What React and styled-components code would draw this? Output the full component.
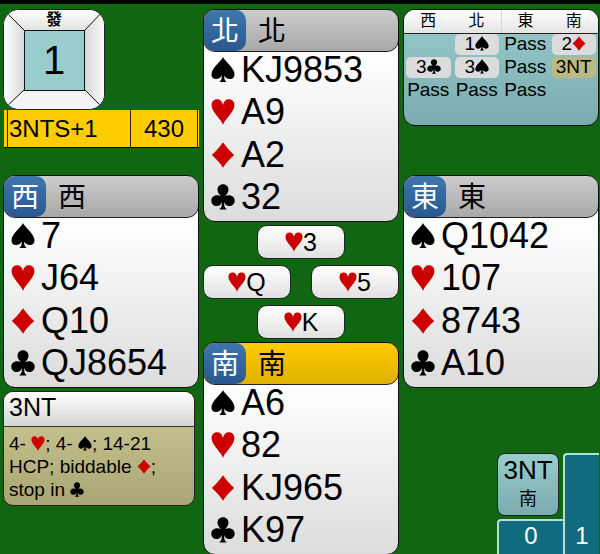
import React from "react";
import styled, { createGlobalStyle } from "styled-components";

const GlobalStyle = createGlobalStyle`
	* {
		box-sizing: border-box;
	}

	body {
		margin: 0;
		background: #116611;
		color: #000;
		font-family: "Liberation Sans", "Noto Sans CJK TC", sans-serif;
	}
`;

const StyledTable = styled.main`
	display: grid;
	grid-template-columns: repeat(3, 1fr);
	grid-template-rows: minmax(0, 1fr);
	gap: 4px;
	height: 100vh;
	min-height: 554px;
	overflow: hidden;
	padding: 5px 1px 0 3px;
	border-top: 4px solid #000;
	background: #116611;
`;

const StyledColumn = styled.div`
	display: flex;
	flex-direction: column;
	gap: 3px;
	min-width: 0;
`;

const StyledTop = styled.div`
	flex: none;
	height: 163px;
`;

const StyledBoard = styled.div`
	position: relative;
	display: grid;
	grid-template-rows: 20px 61px;
	justify-content: center;
	justify-items: center;
	width: 102px;
	height: 101px;
	border: 1px solid #222;
	border-radius: 16px;
	background: #fafafa;
	overflow: hidden;
`;

const StyledFrame = styled.svg`
	position: absolute;
	inset: 0;
`;

const StyledDealer = styled.span`
	z-index: 1;
	font-size: 16px;
	font-weight: 700;
	line-height: 20px;
`;

const StyledBoardNumber = styled.span`
	z-index: 1;
	font-size: 40px;
	line-height: 60px;
`;

const StyledScore = styled.div`
	display: flex;
	height: 38px;
	margin-left: 1px;
	padding: 0 1px 0 3px;
	border-bottom: 1px solid #000;
	background: #ffcc00;
	font-size: 24px;
	line-height: 37px;
`;

const StyledResult = styled.span`
	flex: 1;
	padding-left: 1px;
	border-left: 1px solid #222;
`;

const StyledPoints = styled.span`
	width: 68px;
	text-align: center;
	border: solid #222;
	border-width: 0 1px;
`;

const StyledHand = styled.section`
	flex: none;
	border: 1px solid #111;
	border-radius: 12px;
	overflow: hidden;
	background: linear-gradient(#fff 20%, #dcdcdc);
`;

const StyledHandHeader = styled.header`
	display: flex;
	gap: 12px;
	height: 43px;
	margin: -1px -1px 0;
	border: 1px solid #222;
	border-radius: 12px;
	overflow: hidden;
	font-size: 28px;
	line-height: 43px;
	background: ${({ $active }) =>
		$active
			? "linear-gradient(#ffcc00, #dfb000)"
			: "linear-gradient(#cccccc, #a8a8a8)"};
`;

const StyledSeat = styled.span`
	width: 42px;
	border-radius: 10px;
	background: linear-gradient(#4076ad, #2a5890);
	color: #fff;
	text-align: center;
`;

const StyledSuits = styled.div`
	display: grid;
	grid-template-rows: repeat(4, 1fr);
	align-items: start;
	height: 169px;
`;

const StyledSuitRow = styled.div`
	display: flex;
	align-items: center;
	gap: 6px;
	height: 36px;
	padding-left: 7px;
	font-size: 36px;
	line-height: 36px;
`;

const StyledSuit = styled.svg`
	width: ${({ $size }) => ({ large: 24, medium: 18, small: 14 })[$size]}px;
	height: ${({ $size }) => ({ large: 26, medium: 20, small: 15 })[$size]}px;
	flex: none;
	vertical-align: -1px;
	fill: ${({ $red }) => ($red ? "#cc0000" : "#000")};
`;

const StyledTrick = styled.div`
	display: flex;
	flex-direction: column;
	align-items: center;
	gap: 6px;
	flex: none;
`;

const StyledTrickRow = styled.div`
	display: flex;
	justify-content: space-between;
	width: 100%;
`;

const StyledCard = styled.div`
	width: 88px;
	height: 34px;
	border: 1px solid #222;
	border-radius: 10px;
	background: linear-gradient(#fff, #e0e0e0);
	font-size: 25px;
	line-height: 32px;
	text-align: center;
`;

const StyledExplanation = styled.section`
	margin-right: 4px;
	border: 1px solid #222;
	border-radius: 10px;
	overflow: hidden;
	background: linear-gradient(#c3c08e 30%, #a9a673);
`;

const StyledExplanationTitle = styled.h2`
	height: 35px;
	margin: 0;
	padding-left: 5px;
	border-bottom: 1px solid #333;
	background: linear-gradient(#fff, #d4d4d4);
	font-size: 25px;
	font-weight: 400;
	line-height: 31px;
`;

const StyledExplanationText = styled.p`
	margin: 0;
	padding: 5px 4px 4px 5px;
	font-size: 19px;
	line-height: 23px;
`;

const StyledAuction = styled.section`
	height: 117px;
	border: 1px solid #111;
	border-radius: 12px;
	overflow: hidden;
	background: linear-gradient(#99cccc, #7aabaf);
`;

const StyledBids = styled.table`
	width: 100%;
	table-layout: fixed;
	border-collapse: collapse;
	font-size: 19px;
	line-height: 20px;
	text-align: center;

	thead {
		background: linear-gradient(#fff, #e4e4e4);
	}

	th {
		height: 23px;
		padding: 0;
		border-bottom: 1px solid #222;
		font-size: 16px;
		font-weight: 400;
	}

	th:nth-child(3) {
		border-left: 1px solid #c4dcdc;
	}

	td {
		height: 23px;
		padding: 0 2px;
	}
`;

const StyledBid = styled.span`
	display: block;
	height: 21px;
	border-radius: 5px;
	background: ${({ $kind }) =>
		({ call: "#dcdcdc", final: "#bdb984" })[$kind] || "none"};
`;

const StyledStatus = styled.div`
	display: grid;
	grid-template-columns: 66px 36px;
	grid-template-rows: 66px 35px;
	justify-content: end;
	margin-top: auto;
`;

const StyledContract = styled.div`
	display: flex;
	flex-direction: column;
	align-items: center;
	width: 62px;
	height: 63px;
	border: 1px solid #222;
	border-radius: 8px;
	background: linear-gradient(#99cccc, #7aabaf);
	font-size: 26px;
	line-height: 32px;
`;

const StyledDeclarer = styled.span`
	font-size: 18px;
	line-height: 26px;
`;

const StyledTricksWon = styled.div`
	display: flex;
	align-items: flex-end;
	justify-content: center;
	grid-row: ${({ $tall }) => ($tall ? "1 / 3" : "2")};
	grid-column: ${({ $tall }) => ($tall ? "2" : "1")};
	border: solid #b5dcd8;
	border-width: 2px 0 0 2px;
	border-radius: 4px 0 0 0;
	background: #0f6b7d;
	color: #fff;
	font-size: 24px;
	line-height: 36px;
`;

const suits = {
	S: {
		name: "spades",
		path: "M12 0C13.500 4 23.500 11 23.500 17.200C23.500 20.500 21.300 22 19 22C16.500 22 14.300 20.800 13.200 18.600C13.200 22 13.700 23.700 15.200 24.200V25H8.800V24.200C10.300 23.700 10.800 22 10.800 18.600C9.700 20.800 7.500 22 5 22C2.700 22 0.500 20.500 0.500 17.200C0.500 11 10.500 4 12 0Z",
	},
	H: {
		name: "hearts",
		path: "M12 26C10.500 20.500 1 13.500 0.600 6.800C0.300 2.800 2.700 0.300 6.200 0.300C9.200 0.300 11.200 2.200 12 6C12.800 2.200 14.800 0.300 17.800 0.300C21.300 0.300 23.700 2.800 23.400 6.800C23 13.500 13.500 20.500 12 26Z",
	},
	D: {
		name: "diamonds",
		path: "M12 0.300C15 4.800 18.800 9.200 23.200 13C18.800 16.800 15 21.200 12 25.700C9 21.200 5.200 16.800 0.800 13C5.200 9.200 9 4.800 12 0.300Z",
	},
	C: {
		name: "clubs",
		path: "M12 0.300C15.200 0.300 17.500 2.600 17.500 5.700C17.500 8.300 15.800 10.300 14 12C15.200 11.500 16.300 11.200 17.800 11.200C21.200 11.200 23.700 13.500 23.700 16.700C23.700 19.800 21.300 22 18.200 22C15.700 22 14 20.500 13.100 18C13.100 21.700 13.500 24 15.400 24.700V25.600H8.600V24.700C10.500 24 10.900 21.700 10.900 18C10 20.500 8.300 22 5.800 22C2.700 22 0.300 19.800 0.300 16.700C0.300 13.500 2.800 11.200 6.200 11.200C7.700 11.200 8.800 11.500 10 12C8.200 10.300 6.500 8.300 6.500 5.700C6.500 2.600 8.800 0.300 12 0.300Z",
	},
};

const hands = {
	north: { seat: "北", cards: ["KJ9853", "A9", "A2", "32"] },
	west: { seat: "西", cards: ["7", "J64", "Q10", "QJ8654"] },
	east: { seat: "東", cards: ["Q1042", "107", "8743", "A10"] },
	south: { seat: "南", cards: ["A6", "82", "KJ965", "K97"] },
};

const auction = [
	["", "1S", "Pass", "2D"],
	["3C", "3S", "Pass", "3NT"],
	["Pass", "Pass", "Pass", ""],
];

const Suit = ({ suit, size = "small" }) => (
	<StyledSuit
		$size={size}
		$red={suit === "H" || suit === "D"}
		viewBox="0 0 24 26"
		role="img"
		aria-label={suits[suit].name}
	>
		<path d={suits[suit].path} />
	</StyledSuit>
);

const Board = ({ number }) => (
	<StyledBoard>
		<StyledFrame width="100" height="99" viewBox="0 0 100 99" aria-hidden="true">
			<defs>
				<linearGradient id="left">
					<stop offset="0" stopColor="#fff" />
					<stop offset="1" stopColor="#d8d8d8" />
				</linearGradient>
				<linearGradient id="right">
					<stop offset="0" stopColor="#d8d8d8" />
					<stop offset="1" stopColor="#fafafa" />
				</linearGradient>
				<linearGradient id="edge" x2="0" y2="1">
					<stop offset="0" stopColor="#fff" />
					<stop offset="1" stopColor="#e2e2e2" />
				</linearGradient>
			</defs>
			<path d="M0 0H100L81 20H20Z" fill="url(#edge)" />
			<path d="M20 80H81L100 99H0Z" fill="#f4f4f4" />
			<path d="M0 0L20 20V80L0 99Z" fill="url(#left)" />
			<path d="M100 0L81 20V80L100 99Z" fill="url(#right)" />
			<path d="M0 0L20 20M100 0L81 20M0 99L20 80M100 99L81 80" stroke="#111" />
			<rect x="20.500" y="20.500" width="60" height="60" fill="#99cccc" stroke="#111" />
		</StyledFrame>
		<StyledDealer>發</StyledDealer>
		<StyledBoardNumber>{number}</StyledBoardNumber>
	</StyledBoard>
);

const Hand = ({ seat, cards, active }) => (
	<StyledHand>
		<StyledHandHeader $active={active}>
			<StyledSeat>{seat}</StyledSeat>
			<span>{seat}</span>
		</StyledHandHeader>
		<StyledSuits>
			{Object.keys(suits).map((suit, i) => (
				<StyledSuitRow key={suit}>
					<Suit suit={suit} size="large" />
					<span>{cards[i]}</span>
				</StyledSuitRow>
			))}
		</StyledSuits>
	</StyledHand>
);

const Card = ({ suit, rank }) => (
	<StyledCard>
		<Suit suit={suit} size="medium" />
		{rank}
	</StyledCard>
);

const Bid = ({ call }) => {
	if (!call) return null;
	if (call === "Pass") return <StyledBid>{call}</StyledBid>;
	if (call === "3NT") return <StyledBid $kind="final">{call}</StyledBid>;
	return (
		<StyledBid $kind="call">
			{call[0]}
			<Suit suit={call[1]} />
		</StyledBid>
	);
};

const Auction = () => (
	<StyledAuction>
		<StyledBids>
			<thead>
				<tr>
					<th scope="col">西</th>
					<th scope="col">北</th>
					<th scope="col">東</th>
					<th scope="col">南</th>
				</tr>
			</thead>
			<tbody>
				{auction.map((round, i) => (
					<tr key={i}>
						{round.map((call, j) => (
							<td key={j}>
								<Bid call={call} />
							</td>
						))}
					</tr>
				))}
			</tbody>
		</StyledBids>
	</StyledAuction>
);

const App = () => {
	return (
		<>
			<GlobalStyle />
			<StyledTable>
				<StyledColumn>
					<StyledTop>
						<Board number={1} />
						<StyledScore>
							<StyledResult>3NTS+1</StyledResult>
							<StyledPoints>430</StyledPoints>
						</StyledScore>
					</StyledTop>
					<Hand {...hands.west} />
					<StyledExplanation>
						<StyledExplanationTitle>3NT</StyledExplanationTitle>
						<StyledExplanationText>
							4- <Suit suit="H" />; 4- <Suit suit="S" />; 14-21 HCP; biddable{" "}
							<Suit suit="D" />; stop in <Suit suit="C" />
						</StyledExplanationText>
					</StyledExplanation>
				</StyledColumn>

				<StyledColumn>
					<Hand {...hands.north} />
					<StyledTrick>
						<Card suit="H" rank="3" />
						<StyledTrickRow>
							<Card suit="H" rank="Q" />
							<Card suit="H" rank="5" />
						</StyledTrickRow>
						<Card suit="H" rank="K" />
					</StyledTrick>
					<Hand {...hands.south} active />
				</StyledColumn>

				<StyledColumn>
					<StyledTop>
						<Auction />
					</StyledTop>
					<Hand {...hands.east} />
					<StyledStatus>
						<StyledContract>
							3NT
							<StyledDeclarer>南</StyledDeclarer>
						</StyledContract>
						<StyledTricksWon>0</StyledTricksWon>
						<StyledTricksWon $tall>1</StyledTricksWon>
					</StyledStatus>
				</StyledColumn>
			</StyledTable>
		</>
	);
};

export default App;
